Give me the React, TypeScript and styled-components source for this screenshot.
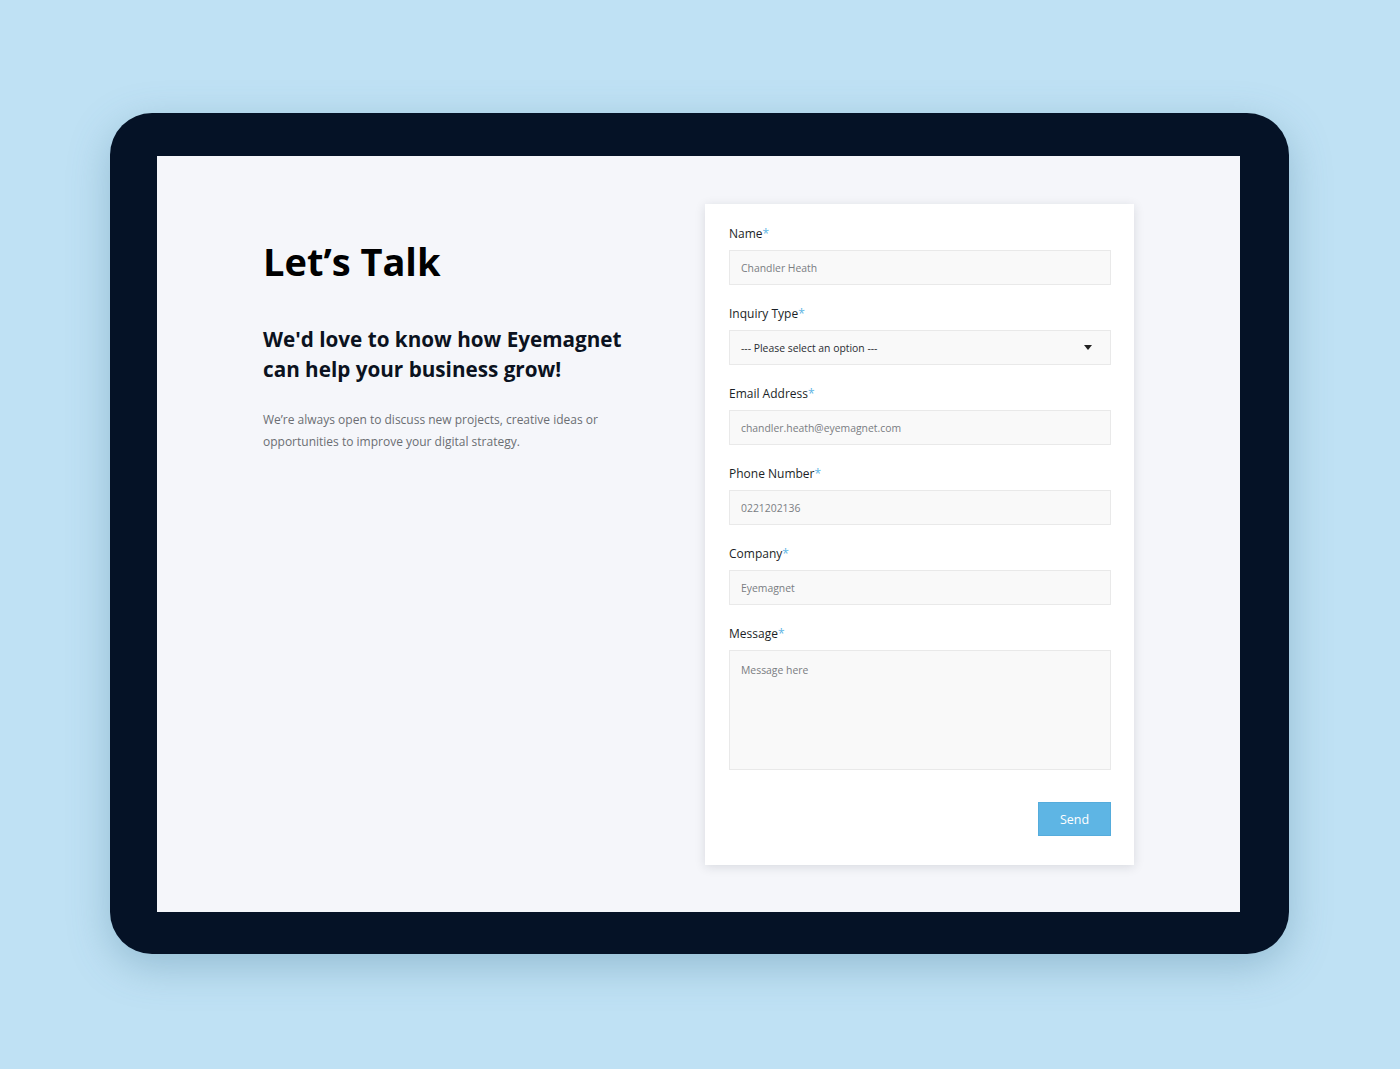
import React from "react";
import styled, { createGlobalStyle } from "styled-components";

const Global = createGlobalStyle`
  html, body { margin: 0; padding: 0; }
  body {
    background: #bfe1f4;
    font-family: "Open Sans", "Noto Sans", sans-serif;
    -webkit-font-smoothing: antialiased;
  }
  * { box-sizing: border-box; }
`;

const Page = styled.div`
  width: 1400px;
  height: 1069px;
  display: flex;
  justify-content: flex-start;
  align-items: flex-start;
  padding: 113px 0 0 110px;
`;

const Device = styled.div`
  width: 1179px;
  height: 841px;
  background: #051226;
  border-radius: 42px;
  padding: 43px 49px 42px 47px;
  box-shadow: 0 12px 40px rgba(70, 120, 150, 0.35);
`;

const Screen = styled.div`
  width: 100%;
  height: 100%;
  background: #f5f6fa;
  display: flex;
  justify-content: space-between;
  padding: 48px 106px 0 106px;
`;

const Intro = styled.div`
  padding-top: 33px;
  width: 400px;
`;

const Title = styled.h1`
  margin: 0;
  font-size: 38px;
  line-height: 48px;
  font-weight: 700;
  color: #000;
`;

const Subtitle = styled.h2`
  margin: 39px 0 0;
  font-size: 20.7px;
  line-height: 30px;
  font-weight: 700;
  color: #0b1220;
  max-width: 366px;
`;

const Lead = styled.p`
  margin: 25px 0 0;
  font-size: 12px;
  line-height: 22px;
  color: #6b6e73;
  max-width: 345px;
`;

const Card = styled.form`
  width: 429px;
  align-self: flex-start;
  background: #fff;
  padding: 20px 23px 29px 24px;
  box-shadow: 0 2px 10px rgba(20, 30, 50, 0.13);
  display: flex;
  flex-direction: column;
`;

const Field = styled.div`
  display: flex;
  flex-direction: column;
  margin-bottom: 19px;
`;

const Label = styled.label`
  font-size: 12px;
  line-height: 18px;
  color: #1b1f27;
  margin-bottom: 8px;
  padding-top: 1px;
  height: 18px;
`;

const Star = styled.span`
  color: #5eb5e4;
`;

const Box = styled.div<{ $tall?: boolean; $dark?: boolean }>`
  height: ${(p) => (p.$tall ? "120px" : "35px")};
  background: #f9f9f9;
  border: 1px solid #e9e9e9;
  padding: ${(p) => (p.$tall ? "11px 11px" : "0 11px")};
  display: flex;
  align-items: ${(p) => (p.$tall ? "flex-start" : "center")};
  justify-content: space-between;
  font-size: 10.4px;
  line-height: 16px;
  color: ${(p) => (p.$dark ? "#2a2d33" : "#7a7d82")};
`;

const Caret = styled.svg`
  width: 8px;
  height: 5px;
  margin-right: 7px;
`;

const Actions = styled.div`
  display: flex;
  justify-content: flex-end;
  margin-top: 13px;
`;

const SendButton = styled.button`
  width: 73px;
  height: 34px;
  background: #5eb5e4;
  border: 1px solid #55acdc;
  color: #fff;
  font-family: "Open Sans", sans-serif;
  font-size: 12.5px;
  padding: 0;
  cursor: pointer;
`;

const fields: { label: string; value: string; select?: boolean; tall?: boolean }[] = [
  { label: "Name", value: "Chandler Heath" },
  { label: "Inquiry Type", value: "--- Please select an option ---", select: true },
  { label: "Email Address", value: "chandler.heath@eyemagnet.com" },
  { label: "Phone Number", value: "0221202136" },
  { label: "Company", value: "Eyemagnet" },
  { label: "Message", value: "Message here", tall: true },
];

export default function App() {
  return (
    <>
      <Global />
      <Page>
        <Device>
          <Screen>
            <Intro>
              <Title>Let’s Talk</Title>
              <Subtitle>We'd love to know how Eyemagnet can help your business grow!</Subtitle>
              <Lead>
                We’re always open to discuss new projects, creative ideas or opportunities to improve your digital strategy.
              </Lead>
            </Intro>
            <Card onSubmit={(e) => e.preventDefault()}>
              {fields.map((f) => (
                <Field key={f.label}>
                  <Label>
                    {f.label}
                    <Star>*</Star>
                  </Label>
                  <Box $tall={f.tall} $dark={f.select}>
                    <span>{f.value}</span>
                    {f.select && (
                      <Caret viewBox="0 0 8 5">
                        <path d="M0 0 L8 0 L4 5 Z" fill="#222" />
                      </Caret>
                    )}
                  </Box>
                </Field>
              ))}
              <Actions>
                <SendButton type="submit">Send</SendButton>
              </Actions>
            </Card>
          </Screen>
        </Device>
      </Page>
    </>
  );
}
